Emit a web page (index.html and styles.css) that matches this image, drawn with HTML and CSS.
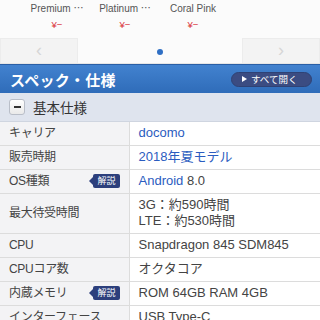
FILE: index.html
```html
<!DOCTYPE html>
<html lang="ja">
<head>
  <meta charset="UTF-8" />
  <meta name="viewport" content="width=device-width, initial-scale=1.0"/>
  <title>スペック・仕様</title>
  <link rel="stylesheet" href="styles.css">
</head>
<body>
  <div class="colors">
    <div class="color">
      <p class="name">Premium ⋯</p>
      <p class="price">¥−</p>
    </div>
    <div class="color">
      <p class="name">Platinum ⋯</p>
      <p class="price">¥−</p>
    </div>
    <div class="color">
      <p class="name">Coral Pink</p>
      <p class="price">¥−</p>
    </div>
  </div>

  <div class="pager">
    <div class="arrow">‹</div>
    <div class="dots"><span class="dot"></span></div>
    <div class="arrow">›</div>
  </div>

  <div class="spec-head">
    <h1>スペック・仕様</h1>
    <button class="open-all"><span class="tri"></span>すべて開く</button>
  </div>

  <div class="section-head">
    <span class="toggle"><span class="bar"></span></span>
    <h2>基本仕様</h2>
  </div>

  <table class="spec">
    <tr>
      <th>キャリア</th>
      <td><span class="link">docomo</span></td>
    </tr>
    <tr>
      <th>販売時期</th>
      <td><span class="link">2018年夏モデル</span></td>
    </tr>
    <tr>
      <th><div class="label">OS種類<span class="badge">解説</span></div></th>
      <td><span class="link">Android</span> 8.0</td>
    </tr>
    <tr>
      <th>最大待受時間</th>
      <td>3G：約590時間<br>LTE：約530時間</td>
    </tr>
    <tr>
      <th>CPU</th>
      <td>Snapdragon 845 SDM845</td>
    </tr>
    <tr>
      <th>CPUコア数</th>
      <td>オクタコア</td>
    </tr>
    <tr>
      <th><div class="label">内蔵メモリ<span class="badge">解説</span></div></th>
      <td>ROM 64GB RAM 4GB</td>
    </tr>
    <tr>
      <th>インターフェース</th>
      <td>USB Type-C</td>
    </tr>
  </table>
</body>
</html>
```

FILE: styles.css
```css
* {
  box-sizing: border-box;
}

body {
  font-family: "Liberation Sans", "Noto Sans CJK JP", sans-serif;
  margin: 0;
  padding: 0;
  background-color: #fff;
  color: #333;
}

.colors {
  display: flex;
  padding: 2px 0 0 23px;
  height: 38px;
  background-color: #fbfbfb;
}

.color {
  width: 68px;
  text-align: center;
}

.color p {
  margin: 0;
}

.name {
  font-size: 10px;
  line-height: 14px;
  color: #555;
}

.price {
  margin-top: 3px !important;
  font-size: 9.5px;
  line-height: 12px;
  color: #d9333a;
}

.pager {
  display: flex;
  align-items: stretch;
  height: 26px;
  background-color: #fbfbfb;
  border-bottom: 1px solid #e6e6e6;
}

.arrow {
  width: 78px;
  background-color: #f3f3f3;
  border: 1px solid #ececec;
  border-bottom: none;
  color: #d6d6d6;
  font-size: 18px;
  line-height: 22px;
  text-align: center;
}

.dots {
  flex: 1;
  display: flex;
  align-items: center;
  justify-content: center;
}

.dot {
  width: 6px;
  height: 6px;
  border-radius: 50%;
  background-color: #2f6fc4;
  margin-top: 2px;
}

.spec-head {
  display: flex;
  align-items: center;
  justify-content: space-between;
  height: 29px;
  padding: 0 8px 0 10px;
  background: linear-gradient(#4282cf, #2f6cb9);
  border-top: 1px solid #2a5fa6;
}

.spec-head h1 {
  margin: 0;
  color: #fff;
  font-size: 15px;
  font-weight: bold;
  letter-spacing: 0.3px;
}

.open-all {
  display: flex;
  align-items: center;
  gap: 4px;
  width: 81px;
  height: 15px;
  padding: 0 0 0 10px;
  border: 1px solid #2f4275;
  border-radius: 8px;
  background-color: #3b4c82;
  color: #fff;
  font-family: inherit;
  font-size: 9.5px;
}

.tri {
  width: 0;
  height: 0;
  border-left: 5px solid #fff;
  border-top: 3.5px solid transparent;
  border-bottom: 3.5px solid transparent;
}

.section-head {
  display: flex;
  align-items: center;
  gap: 8px;
  height: 29px;
  padding: 0 9px;
  background-color: #dfe4ee;
  border-bottom: 1px solid #cfd5e0;
}

.toggle {
  display: flex;
  align-items: center;
  justify-content: center;
  width: 16px;
  height: 16px;
  border: 1px solid #b9bec8;
  border-radius: 3px;
  background: linear-gradient(#ffffff, #e9e9e9);
}

.bar {
  width: 7px;
  height: 2px;
  background-color: #333;
}

.section-head h2 {
  margin: 0;
  font-size: 13.5px;
  font-weight: normal;
  color: #333;
}

.spec {
  width: 100%;
  border-collapse: collapse;
  font-size: 12px;
}

.spec th,
.spec td {
  border-bottom: 1px solid #dcdcdc;
  padding: 3px 9px 4px;
  line-height: 16px;
  text-align: left;
  font-weight: normal;
  vertical-align: middle;
}

.spec th {
  width: 129px;
  background-color: #f3f3f5;
  border-right: 1px solid #dcdcdc;
  color: #444;
  letter-spacing: -0.3px;
}

.spec td {
  font-size: 13px;
  color: #444;
}

.link {
  color: #2b5cc0;
}

.label {
  display: flex;
  align-items: center;
  justify-content: space-between;
}

.badge {
  position: relative;
  padding: 0 4px;
  height: 14px;
  line-height: 14px;
  border-radius: 2px;
  background-color: #2c3f7c;
  color: #fff;
  font-size: 9px;
  letter-spacing: 0;
}

.badge::before {
  content: "";
  position: absolute;
  left: -4px;
  top: 3px;
  border-right: 4px solid #2c3f7c;
  border-top: 4px solid transparent;
  border-bottom: 4px solid transparent;
}
```
